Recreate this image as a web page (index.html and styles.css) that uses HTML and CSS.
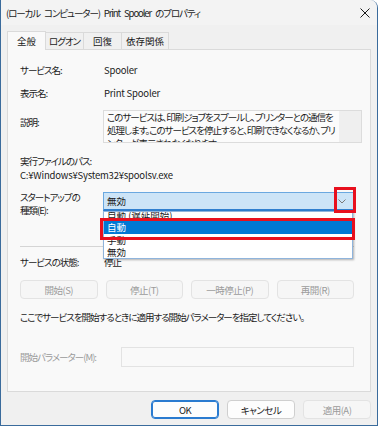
FILE: index.html
```html
<!DOCTYPE html>
<html lang="ja">
<head>
<meta charset="utf-8">
<link rel="stylesheet" href="styles.css">
</head>
<body>
<div class="window">
  <div class="titlebar">
    <span class="title">(ローカル コンピューター) Print Spooler のプロパティ</span>
    <svg class="close" width="10" height="10" viewBox="0 0 10 10"><path d="M0.5 0.5 L9.5 9.5 M9.5 0.5 L0.5 9.5" stroke="#1a1a1a" stroke-width="1"/></svg>
  </div>
  <div class="body">
    <div class="tabs">
      <div class="tab tab-active tab-general">全般</div>
      <div class="tab tab-logon">ログオン</div>
      <div class="tab tab-recover">回復</div>
      <div class="tab tab-deps">依存関係</div>
    </div>
    <div class="panel">
      <div class="row row-name">
        <span class="label">サービス名:</span>
        <span class="value latin">Spooler</span>
      </div>
      <div class="row row-display">
        <span class="label">表示名:</span>
        <span class="value latin">Print Spooler</span>
      </div>
      <div class="row row-desc">
        <span class="label label-desc">説明:</span>
        <div class="textarea">
          <div class="textarea-text">このサービスは、印刷ジョブをスプールし、プリンターとの通信を処理します。このサービスを停止すると、印刷できなくなるか、プリンターが表示されなくなります</div>
          <div class="scrolltrack"></div>
        </div>
      </div>
      <div class="path-label">実行ファイルのパス:</div>
      <div class="path-value latin">C:¥Windows¥System32¥spoolsv.exe</div>
      <div class="row row-startup">
        <span class="label label-startup">スタートアップの<br>種類(E):</span>
        <div class="combo-wrap">
          <div class="combo">
            <span class="combo-text">無効</span>
            <svg class="chevron" width="8" height="5" viewBox="0 0 8 5"><path d="M0.5 0.5 L4 4 L7.5 0.5" fill="none" stroke="#7a7a7a" stroke-width="1"/></svg>
          </div>
          <ul class="dropdown">
            <li class="dd-item">自動 (遅延開始)</li>
            <li class="dd-item dd-selected">自動</li>
            <li class="dd-item">手動</li>
            <li class="dd-item">無効</li>
          </ul>
          <div class="mark mark-chevron"></div>
          <div class="mark mark-item"></div>
        </div>
      </div>
      <div class="separator"></div>
      <div class="row row-state">
        <span class="label">サービスの状態:</span>
        <span class="value">停止</span>
      </div>
      <div class="svc-buttons">
        <button class="btn btn-disabled">開始(S)</button>
        <button class="btn btn-disabled">停止(T)</button>
        <button class="btn btn-disabled">一時停止(P)</button>
        <button class="btn btn-disabled">再開(R)</button>
      </div>
      <div class="hint">ここでサービスを開始するときに適用する開始パラメーターを指定してください。</div>
      <div class="param-row">
        <span class="param-label">開始パラメーター(M):</span>
        <div class="param-input"></div>
      </div>
    </div>
    <div class="footer">
      <button class="fbtn fbtn-default">OK</button>
      <button class="fbtn">キャンセル</button>
      <button class="fbtn fbtn-disabled">適用(A)</button>
    </div>
  </div>
</div>
</body>
</html>
```

FILE: styles.css
```css
* { box-sizing: border-box; }
html, body { margin: 0; padding: 0; }
body {
  width: 378px;
  height: 427px;
  overflow: hidden;
  background: #ffffff;
  font-family: "Noto Sans CJK JP", "Noto Sans", sans-serif;
  font-size: 9.5px;
  letter-spacing: -1px;
  word-spacing: 2px;
  font-feature-settings: "palt";
  color: #1b1b1b;
}
.latin { letter-spacing: -0.2px; word-spacing: 0; }
.window {
  width: 378px;
  height: 426px;
  border: 1px solid #3a6b9c;
  border-top: none;
  border-top-right-radius: 8px;
  background: #f0f0f0;
  display: flex;
  flex-direction: column;
  overflow: hidden;
}
.titlebar {
  height: 25px;
  flex: none;
  background: #f3f3f3;
  display: flex;
  align-items: center;
  justify-content: space-between;
  padding: 0 7px 0 5px;
}
.title { line-height: 14px; letter-spacing: -1.1px; word-spacing: 3px; }
.close { display: block; }
.body {
  flex: 1;
  display: flex;
  flex-direction: column;
  padding: 6px 6px 0 6px;
}
.tabs {
  display: flex;
  height: 18px;
  flex: none;
  align-items: flex-end;
  position: relative;
  z-index: 1;
}
.tab {
  height: 17px;
  border: 1px solid #dadada;
  border-bottom: none;
  border-left: none;
  background: #f0f0f0;
  text-align: center;
  line-height: 16px;
}
.tab-active {
  height: 19px;
  margin-bottom: -1px;
  background: #f9f9f9;
  border-left: 1px solid #dadada;
  border-right: 1px solid #dadada;
  line-height: 18px;
}
.tab-general { width: 39px; letter-spacing: 0; }
.tab-logon { width: 38px; }
.tab-recover { width: 38px; letter-spacing: 0; }
.tab-deps { width: 47px; letter-spacing: 0; }
.panel {
  width: 364px;
  height: 343px;
  flex: none;
  background: #f9f9f9;
  border: 1px solid #dadada;
  padding: 13px 16px 0 12px;
  display: flex;
  flex-direction: column;
  position: relative;
}
.row {
  display: grid;
  grid-template-columns: 83px 1fr;
  line-height: 14px;
}
.value { padding-left: 1px; }
.row-display { margin-top: 9px; }
.row-desc { margin-top: 10px; align-items: start; }
.label-desc { padding-top: 5px; }
.textarea {
  width: 259px;
  height: 33px;
  border: 1px solid #dcdcdc;
  background: #fbfbfb;
  display: flex;
  overflow: hidden;
}
.textarea-text {
  flex: 1;
  padding: 0 2px 0 3px;
  line-height: 13px;
}
.scrolltrack {
  width: 22px;
  flex: none;
  background: #efefef;
}
.path-label { margin-top: 11px; line-height: 14px; }
.path-value { line-height: 14px; }
.row-startup { margin-top: 8px; align-items: start; }
.label-startup { line-height: 13px; padding-top: 1px; }
.combo-wrap {
  position: relative;
  width: 251px;
  margin-top: 2px;
}
.combo {
  height: 19px;
  background: #cce4f7;
  border: 1px solid #6aa8e0;
  border-bottom: 2px solid #2f7fcf;
  display: flex;
  align-items: center;
  justify-content: space-between;
  padding: 0 7px 0 3px;
}
.combo-text { line-height: 14px; letter-spacing: 0; }
.chevron { display: block; }
.dropdown {
  position: absolute;
  left: 0;
  top: 19px;
  width: 250px;
  height: 48px;
  margin: 0;
  padding: 0;
  list-style: none;
  background: #ffffff;
  border: 1px solid #8fb4dc;
  box-shadow: 1px 1px 2px rgba(0,0,0,0.3);
  z-index: 2;
  overflow: hidden;
  letter-spacing: 0;
  word-spacing: 0;
}
.dd-item {
  height: 12px;
  line-height: 12px;
  padding-left: 3px;
  color: #1b1b1b;
}
.dd-item:first-child { margin-top: -3px; }
.dd-selected {
  height: 13px;
  line-height: 13px;
  background: #0078d4;
  color: #ffffff;
}
.mark {
  position: absolute;
  border: 3px solid #e8101e;
  z-index: 3;
}
.mark-chevron {
  left: 231px;
  top: -5px;
  width: 22px;
  height: 26px;
}
.mark-item {
  left: -3px;
  top: 26px;
  width: 255px;
  height: 22px;
}
.separator {
  margin-top: 29px;
  height: 1px;
  background: #d5d5d5;
}
.row-state { margin-top: 8px; }
.svc-buttons {
  margin-top: 11px;
  display: grid;
  grid-template-columns: repeat(4, 1fr);
  column-gap: 8px;
}
.btn {
  height: 19px;
  font: inherit;
  letter-spacing: -0.5px;
  line-height: 14px;
  padding: 0;
  border-radius: 4px;
  border: 1px solid #e3e3e3;
  background: #f6f6f6;
  color: #9b9b9b;
}
.hint { margin-top: 11px; line-height: 14px; white-space: nowrap; }
.param-row {
  margin-top: 23px;
  display: flex;
  align-items: center;
  justify-content: space-between;
}
.param-label { color: #9b9b9b; line-height: 14px; }
.param-input {
  width: 233px;
  height: 20px;
  border: 1px solid #e3e3e3;
  background: #f9f9f9;
}
.footer {
  display: flex;
  justify-content: flex-end;
  gap: 8px;
  padding-top: 8px;
  padding-right: 0;
}
.fbtn {
  width: 68px;
  height: 19px;
  font: inherit;
  letter-spacing: -0.5px;
  line-height: 14px;
  padding: 0;
  border-radius: 4px;
  border: 1px solid #cfcfcf;
  background: #fdfdfd;
  color: #1b1b1b;
}
.fbtn-default {
  border: 1px solid #2a7bd0;
  box-shadow: inset 0 0 0 1px #2a7bd0;
}
.fbtn-disabled {
  background: #f6f6f6;
  border-color: #e3e3e3;
  color: #9b9b9b;
}
```
